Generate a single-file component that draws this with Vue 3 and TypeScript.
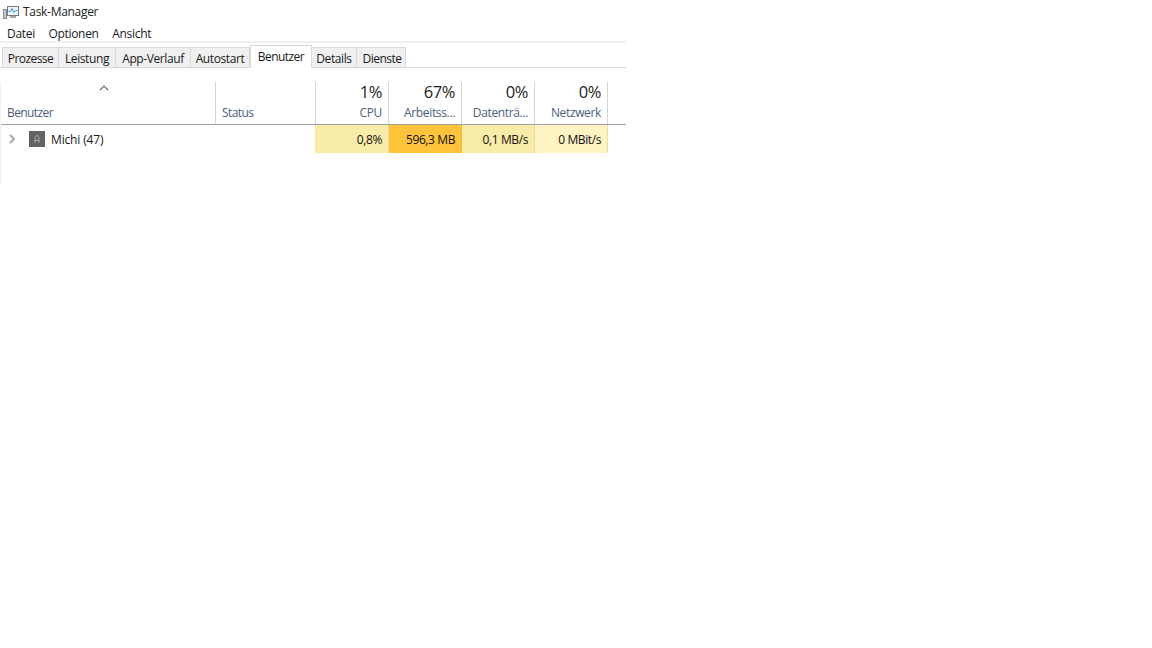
<script setup lang="ts">
const menus: string[] = ['Datei', 'Optionen', 'Ansicht']
const tabs = [
  { label: 'Prozesse', width: 57 },
  { label: 'Leistung', width: 57 },
  { label: 'App-Verlauf', width: 75 },
  { label: 'Autostart', width: 59 },
  { label: 'Benutzer', width: 62, active: true },
  { label: 'Details', width: 45 },
  { label: 'Dienste', width: 49 },
]
const meters = [
  { pct: '1%', name: 'CPU', value: '0,8%', cls: 'c1' },
  { pct: '67%', name: 'Arbeitss...', value: '596,3 MB', cls: 'c2' },
  { pct: '0%', name: 'Datenträ...', value: '0,1 MB/s', cls: 'c1' },
  { pct: '0%', name: 'Netzwerk', value: '0 MBit/s', cls: 'c3' },
]
</script>

<template>
  <div class="window">
    <div class="titlebar">
      <svg class="appicon" width="17" height="16" viewBox="0 0 17 16">
        <rect x="1.5" y="4.5" width="3" height="9" fill="#c3c7c3" stroke="#7f8a80" />
        <rect x="5.5" y="1.5" width="11" height="9" fill="#eef5fa" stroke="#6f7b85" />
        <path d="M6.5 6.5 L8.5 6.5 L10 3.5 L12 7.5 L13.5 5.5 L15.5 5.5" fill="none" stroke="#3c9ad6" stroke-width="1" />
        <rect x="8" y="11" width="6" height="2" fill="#a3aaa8" />
      </svg>
      <span>Task-Manager</span>
    </div>
    <div class="menubar">
      <span v-for="m in menus" :key="m" class="menu">{{ m }}</span>
    </div>
    <div class="tabs">
      <div
        v-for="t in tabs"
        :key="t.label"
        class="tab"
        :class="{ active: t.active }"
        :style="{ width: t.width + 'px' }"
      >{{ t.label }}</div>
    </div>
    <div class="content">
      <div class="head">
        <div class="hcell user">
          <svg class="sort" width="10" height="6" viewBox="0 0 10 6">
            <path d="M1 5 L5 1 L9 5" fill="none" stroke="#6b6b6b" stroke-width="1.1" />
          </svg>
          <span class="hname">Benutzer</span>
        </div>
        <div class="hcell status"><span class="hname">Status</span></div>
        <div v-for="m in meters" :key="m.name" class="hcell meter">
          <span class="pct">{{ m.pct }}</span>
          <span class="hname">{{ m.name }}</span>
        </div>
      </div>
      <div class="row">
        <div class="cell user">
          <svg class="chev" width="7" height="10" viewBox="0 0 7 10">
            <path d="M1 1 L5 5 L1 9" fill="none" stroke="#a6a6a6" stroke-width="2" />
          </svg>
          <svg class="avatar" width="16" height="16" viewBox="0 0 16 16">
            <rect width="16" height="16" fill="#636363" />
            <path d="M6 12 V7.5 Q6 4.5 8 4.5 Q10 4.5 10 7.5 V12 M6 9.5 H10" fill="none" stroke="#a9a9a9" stroke-width="1" />
          </svg>
          <span class="uname">Michi (47)</span>
        </div>
        <div class="cell status"></div>
        <div v-for="m in meters" :key="m.name" class="cell val" :class="m.cls">{{ m.value }}</div>
      </div>
    </div>
  </div>
</template>

<style>
html, body { margin: 0; background: #fff; }
</style>

<style scoped>
.window {
  width: 626px;
  font-family: "Open Sans", "Noto Sans", sans-serif;
  font-size: 12px;
  color: #1a1a1a;
  letter-spacing: -0.3px;
}
.titlebar {
  height: 22px;
  display: flex;
  align-items: center;
  padding-left: 2px;
  gap: 4px;
  color: #222;
}
.appicon { flex: none; margin-top: 3px; }
.menubar {
  height: 15px;
  padding-top: 4px;
  display: flex;
  align-items: center;
  padding-left: 7px;
  gap: 13.5px;
  border-bottom: 2px solid #f0f0f0;
  letter-spacing: -0.3px;
}
.tabs {
  height: 24px;
  display: flex;
  align-items: flex-end;
  padding-left: 2px;
  border-bottom: 1px solid #d9d9d9;
  letter-spacing: -0.4px;
}
.tab {
  height: 20px;
  padding-top: 1px;
  box-sizing: border-box;
  background: #f0f0f0;
  border: 1px solid #d9d9d9;
  border-bottom: none;
  border-left-width: 0;
  display: flex;
  align-items: center;
  justify-content: center;
  white-space: nowrap;
}
.tab:first-child { border-left-width: 1px; letter-spacing: -0.55px; }
.tab:last-child { padding-left: 2px; letter-spacing: -0.5px; }
.tab.active {
  height: 23px;
  background: #fff;
  border-left-width: 1px;
  margin-bottom: -1px;
  padding-top: 0;
  padding-bottom: 2px;
  letter-spacing: -0.55px;
}
.content {
  margin-top: 14px;
  height: 102px;
  border-left: 1px solid #f0f0f0;
  box-sizing: border-box;
}
.head {
  height: 43px;
  display: flex;
  border-bottom: 1px solid #a0a0a0;
  box-sizing: border-box;
}
.hcell {
  position: relative;
  box-sizing: border-box;
  border-right: 1px solid #d6d6d6;
  display: flex;
  flex-direction: column;
  justify-content: flex-end;
  padding-bottom: 3px;
}
.hcell.user { width: 215px; flex: none; padding-left: 6px; }
.hcell.status { width: 100px; flex: none; padding-left: 6px; }
.meter { width: 73px; flex: none; align-items: flex-end; padding-right: 6px; }
.sort { position: absolute; left: 98px; top: 3px; }
.hname { color: #4c607a; line-height: 16px; white-space: nowrap; letter-spacing: -0.6px; }
.meter .hname { letter-spacing: -0.35px; }
.pct { font-size: 16.5px; line-height: 21px; color: #222; margin-bottom: 3px; letter-spacing: -0.4px; }
.row { height: 28px; display: flex; }
.cell { box-sizing: border-box; height: 28px; display: flex; align-items: center; }
.cell.user { width: 214px; flex: none; padding-left: 8px; letter-spacing: 0; }
.cell.status { width: 100px; flex: none; }
.chev { flex: none; }
.avatar { flex: none; margin-left: 13px; }
.uname { margin-left: 6px; letter-spacing: -0.15px; }
.val {
  width: 73px;
  flex: none;
  justify-content: flex-end;
  padding-right: 6px;
  border-right: 1px solid #f0dca0;
  color: #111;
  letter-spacing: -0.4px;
}
.cell.status + .val { width: 74px; }
.c1 { background: #f9eca8; }
.c2 { background: #ffc43c; border-right-color: #f0b840; }
.c3 { background: #fdf3c3; }
</style>
